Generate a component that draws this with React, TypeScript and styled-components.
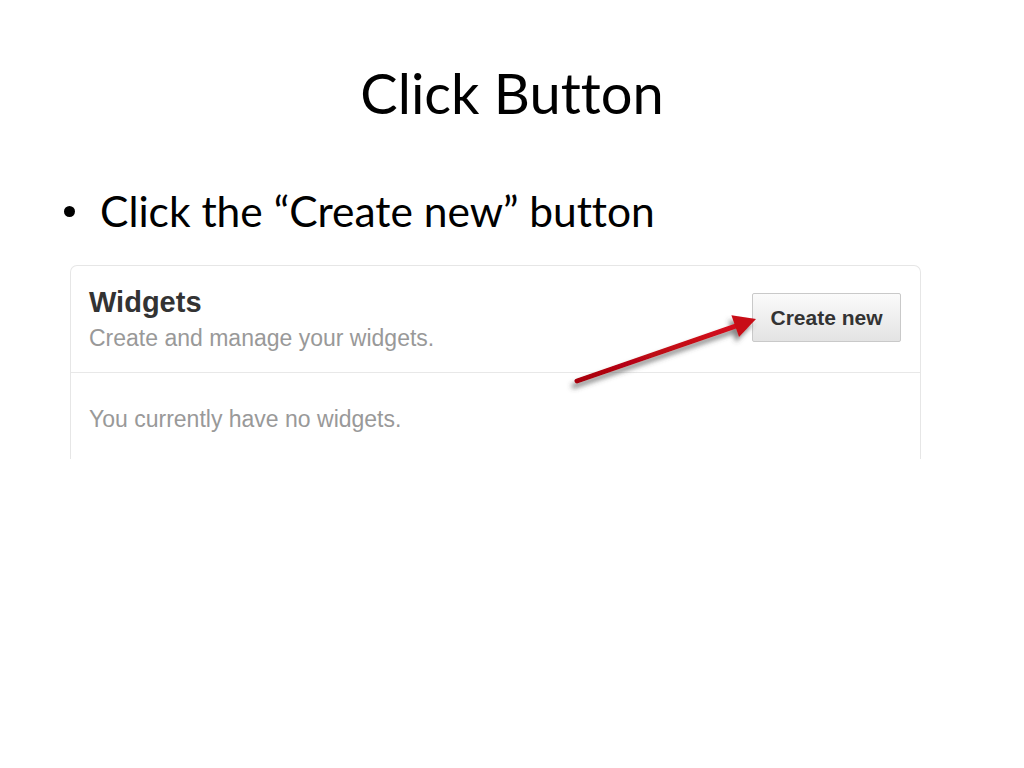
import React from "react";
import styled, {createGlobalStyle} from "styled-components";

const GlobalStyle = createGlobalStyle`
html, body {
margin: 0;
padding: 0;
background: #fff;
}
`

const Slide = styled.div`
width: 1024px;
height: 768px;
padding-top: 65px;
box-sizing: border-box;
font-family: Lato, "Open Sans", sans-serif;
font-variant-ligatures: none;
color: #000;
`

const Title = styled.h1`
margin: 0;
text-align: center;
font-weight: 400;
font-size: 56px;
line-height: 56px;
`

const BulletRow = styled.div`
display: flex;
align-items: center;
margin: 66px 0 0 64px;
height: 48px;
`

const Dot = styled.span`
width: 11px;
height: 11px;
border-radius: 50%;
background: #000;
margin-right: 25px;
`

const BulletText = styled.span`
font-size: 42.5px;
line-height: 48px;
`

const Card = styled.div`
position: relative;
margin: 30px 0 0 70px;
width: 851px;
box-sizing: border-box;
border: 1px solid #e6e6e6;
border-bottom: none;
border-radius: 7px 7px 0 0;
font-family: "Liberation Sans", Arial, sans-serif;
`

const Header = styled.div`
display: flex;
justify-content: space-between;
align-items: flex-start;
padding: 20px 19px 20px 18px;
border-bottom: 1px solid #e8e8e8;
`

const Heading = styled.div`
font-size: 29px;
line-height: 32px;
font-weight: 700;
color: #333;
`

const Sub = styled.div`
margin-top: 6px;
font-size: 23px;
line-height: 28px;
color: #999;
`

const CreateButton = styled.button`
margin-top: 7px;
width: 149px;
height: 49px;
border: 1px solid #c9c9c9;
border-radius: 2px;
background: linear-gradient(#fbfbfb, #e3e3e3);
font-family: "Liberation Sans", Arial, sans-serif;
font-size: 21px;
font-weight: 700;
color: #333;
padding: 0;
`

const Body = styled.div`
padding: 32px 18px 26px;
font-size: 23px;
line-height: 28px;
color: #999;
`

const Overlay = styled.svg`
position: absolute;
left: 0;
top: 0;
pointer-events: none;
overflow: visible;
`

function Arrow() {
    return (
        <Overlay width={851} height={195}>
            <defs>
                <filter id="shadow" x="-20%" y="-40%" width="140%" height="180%">
                    <feDropShadow dx="-3" dy="5" stdDeviation="2.5" floodColor="#444" floodOpacity="0.65"/>
                </filter>
                <linearGradient id="red" x1="0" y1="0" x2="0" y2="1">
                    <stop offset="0" stopColor="#d4101c"/>
                    <stop offset="1" stopColor="#a8000e"/>
                </linearGradient>
            </defs>
            <g filter="url(#shadow)">
                <line x1="506" y1="115" x2="666" y2="59.6" stroke="url(#red)" strokeWidth="5" strokeLinecap="round"/>
                <polygon points="685,53 668,71.1 660.4,49.3" fill="#c80a16"/>
            </g>
        </Overlay>
    )
}

export default function App() {
    return (
        <Slide>
            <GlobalStyle/>
            <Title>Click Button</Title>
            <BulletRow>
                <Dot/>
                <BulletText>Click the “Create new” button</BulletText>
            </BulletRow>
            <Card>
                <Header>
                    <div>
                        <Heading>Widgets</Heading>
                        <Sub>Create and manage your widgets.</Sub>
                    </div>
                    <CreateButton>Create new</CreateButton>
                </Header>
                <Body>You currently have no widgets.</Body>
                <Arrow/>
            </Card>
        </Slide>
    )
}
